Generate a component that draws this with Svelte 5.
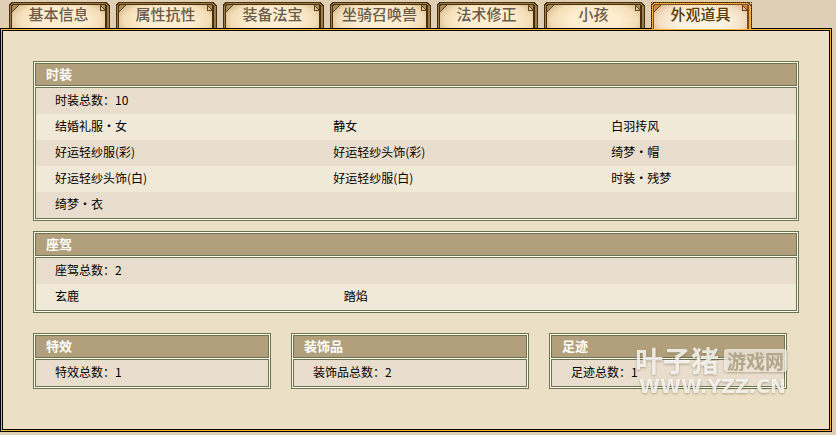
<script lang="ts">
	interface Group {
		title: string;
		countLabel: string;
		count: number;
		rows: string[][];
	}

	const TABS = ['基本信息', '属性抗性', '装备法宝', '坐骑召唤兽', '法术修正', '小孩', '外观道具'];

	const clothes: Group = {
		title: '时装',
		countLabel: '时装总数',
		count: 10,
		rows: [
			['结婚礼服·女', '静女', '白羽抟风'],
			['好运轻纱服(彩)', '好运轻纱头饰(彩)', '绮梦·帽'],
			['好运轻纱头饰(白)', '好运轻纱服(白)', '时装·残梦'],
			['绮梦·衣', '', '']
		]
	};

	const mounts: Group = {
		title: '座驾',
		countLabel: '座驾总数',
		count: 2,
		rows: [['玄鹿', '踏焰']]
	};

	const extras: Group[] = [
		{ title: '特效', countLabel: '特效总数', count: 1, rows: [] },
		{ title: '装饰品', countLabel: '装饰品总数', count: 2, rows: [] },
		{ title: '足迹', countLabel: '足迹总数', count: 1, rows: [] }
	];

	let active = $state('外观道具');
</script>

{#snippet box(group: Group, cols: number)}
	<section class="box">
		<h2>{group.title}</h2>
		<table class:two={cols === 2} class:three={cols === 3}>
			<colgroup>
				{#each { length: cols } as _}
					<col />
				{/each}
			</colgroup>
			<tbody>
				<tr><td colspan={cols}>{group.countLabel}：{group.count}</td></tr>
				{#each group.rows as row}
					<tr>
						{#each row as item}
							<td>{item}</td>
						{/each}
					</tr>
				{/each}
			</tbody>
		</table>
	</section>
{/snippet}

<div class="page">
	<div class="tabs" role="tablist">
		{#each TABS as tab (tab)}
			<button role="tab" class="tab" class:active={tab === active} aria-selected={tab === active} onclick={() => (active = tab)}>
				<svg class="frame" width="101" height="27" viewBox="0 0 101 27" shape-rendering="crispEdges" aria-hidden="true">
					<path class="outside" d="M0 0H2V1H1V2H0ZM98 0H101V3H100V2H99V1H98Z" />
					<path class="rim" d="M1.5 27V2.5H2.5V1.5H98.5V27M99.5 3V27" />
					<path class="corner" d="M3 3H10L3 10Z" />
					<path class="corner" d="M92 3H97V9Z" />
					<path class="line" d="M0.5 27V2.5H1.5V1.5H2.5V0.5H97.5V1.5H98.5V2.5H99.5V3.5H100.5V27" />
					<path class="line" d="M2.5 27V3.5H3.5V2.5H96.5V27M97.5 3V27" />
					<path class="thin" d="M3 9.5H4M4 8.5H5M5 7.5H6M6 6.5H7M7 5.5H8M8 4.5H9M9 3.5H10" />
					<path class="thin" d="M91.5 3V8.5H97M92 4.5H93M93 5.5H94M94 6.5H95M95 7.5H96" />
				</svg>
				<span>{tab}</span>
			</button>
		{/each}
	</div>

	<main class="panel">
		{@render box(clothes, 3)}
		{@render box(mounts, 2)}
		<div class="extras">
			{#each extras as group (group.title)}
				{@render box(group, 1)}
			{/each}
			<div class="watermark">
				<div class="wm-top">
					<span class="wm-name">叶子猪</span>
					<span class="wm-tag">游戏网</span>
				</div>
				<div class="wm-url">WWW.YZZ.CN</div>
			</div>
		</div>
	</main>
</div>

<style>
	:global(body) {
		background: #dfd0b5;
	}

	.page {
		padding: 2px 4px 3px 0;
		font-family: 'Noto Sans CJK SC', 'Liberation Sans', sans-serif;
		font-size: 12px;
		color: #000;
	}

	.tabs {
		display: flex;
		gap: 6px;
		padding-left: 9px;
	}

	.tab {
		position: relative;
		flex: none;
		width: 101px;
		height: 26px;
		padding: 0 2px 2px 0;
		border: none;
		overflow: hidden;
		background: radial-gradient(ellipse 50px 22px at 50% 70%, #ffedcf 50%, #f3deb8 85%, #b99a6a 125%);
		font-family: inherit;
		font-size: 15px;
		font-weight: 500;
		line-height: 24px;
		color: #695b4c;
		cursor: pointer;
	}

	.tab span {
		position: relative;
	}

	.frame {
		position: absolute;
		top: 0;
		left: 0;
	}

	.frame path { fill: none; }
	.frame .outside { fill: #dfd0b5; }
	.frame .corner { fill: #a88c5c; }
	.rim { stroke: #9a7c48; }
	.line { stroke: #4a2e0c; }
	.thin { stroke: #5f4018; }

	.tab.active {
		z-index: 1;
		height: 27px;
		margin-bottom: -1px;
		padding-bottom: 3px;
		background: radial-gradient(ellipse 50px 22px at 50% 70%, #fbf3e0 50%, #f3dfc4 85%, #cf9f6c 125%);
		color: #5a3c00;
	}

	.active .rim { stroke: #f0ae38; }
	.active .line { stroke: #7d4a1c; }
	.active .thin { stroke: #6b3a18; }
	.active .frame .corner { fill: #c98b3c; }

	.tab.active::after {
		content: '';
		position: absolute;
		inset: 0;
		border: 1px dotted #10204a;
		border-bottom: none;
	}

	/* ── Panel ── */
	.panel {
		padding: 32px 32px 42px;
		border: 1px solid #000;
		box-shadow: inset 0 0 0 1px #f3b437, inset 0 0 0 2px #000;
		background: #ebdfc5;
	}

	.box {
		display: grid;
		gap: 1px;
		margin-bottom: 10px;
		padding: 1px;
		border: 1px solid #6b7155;
		background: #fffde6;
	}

	h2 {
		margin: 0;
		padding: 0 0 2px 10px;
		border: 1px solid #6b7155;
		background: #b1a07b;
		font-size: 13px;
		font-weight: 700;
		line-height: 19px;
		color: #fff;
	}

	table {
		width: 100%;
		border: 1px solid #6b7155;
		border-spacing: 0;
		table-layout: fixed;
	}

	.three col:not(:last-child) { width: 36.6%; }
	.two col:first-child { width: 38%; }

	td {
		padding: 0 0 2px 19px;
		line-height: 24px;
	}

	tr { background: #f0e9d7; }
	tr:nth-child(odd) { background: #e9decd; }

	.extras {
		position: relative;
		display: grid;
		grid-template-columns: repeat(3, 1fr);
		gap: 20px;
		margin-top: 20px;
		padding-right: 12px;
	}

	.extras .box {
		margin-bottom: 0;
	}

	/* ── Watermark ── */
	.watermark {
		position: absolute;
		top: 13px;
		right: 12px;
		width: 152px;
		color: rgba(255, 255, 255, 0.8);
		filter: drop-shadow(0 1px 1px rgba(110, 95, 65, 0.6));
		pointer-events: none;
	}

	.wm-top {
		display: flex;
		align-items: center;
		justify-content: space-between;
		height: 28px;
	}

	.wm-name {
		font-size: 28px;
		font-weight: 700;
		line-height: 28px;
	}

	.wm-tag {
		padding: 0 3px;
		border-radius: 3px;
		background: rgba(255, 253, 245, 0.7);
		font-size: 19px;
		font-weight: 700;
		line-height: 23px;
		color: #b5a68a;
	}

	.wm-url {
		padding-left: 4px;
		font-family: 'DejaVu Sans', Verdana, sans-serif;
		font-size: 19px;
		font-weight: 700;
		line-height: 24px;
		white-space: nowrap;
	}
</style>
